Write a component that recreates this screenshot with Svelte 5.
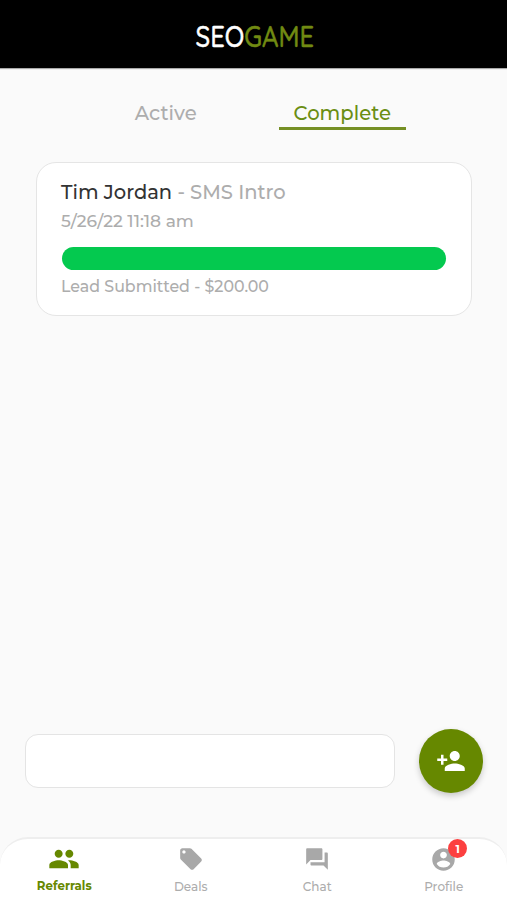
<script>
  const tabs = [
    { name: 'Referrals', size: 32, active: true, path: 'M16 11c1.66 0 2.99-1.34 2.99-3S17.66 5 16 5s-3 1.34-3 3 1.34 3 3 3zm-8 0c1.66 0 2.99-1.34 2.99-3S9.66 5 8 5 5 6.34 5 8s1.34 3 3 3zm0 2c-2.33 0-7 1.17-7 3.5V19h14v-2.5c0-2.33-4.67-3.5-7-3.5zm8 0c-.29 0-.62.02-.97.05 1.16.84 1.97 1.97 1.97 3.45V19h6v-2.5c0-2.33-4.67-3.5-7-3.5z' },
    { name: 'Deals', size: 26, path: 'M21.41 11.58l-9-9C12.05 2.22 11.55 2 11 2H4c-1.1 0-2 .9-2 2v7c0 .55.22 1.05.59 1.42l9 9c.36.36.86.58 1.41.58s1.05-.22 1.41-.59l7-7c.37-.36.59-.86.59-1.41s-.23-1.06-.59-1.42zM5.5 7C4.67 7 4 6.33 4 5.5S4.67 4 5.5 4 7 4.67 7 5.5 6.33 7 5.5 7z' },
    { name: 'Chat', size: 26, path: 'M21 6h-2v9H6v2c0 .55.45 1 1 1h11l4 4V7c0-.55-.45-1-1-1zm-4 6V3c0-.55-.45-1-1-1H3c-.55 0-1 .45-1 1v14l4-4h10c.55 0 1-.45 1-1z' },
    { name: 'Profile', size: 27, badge: 1, path: 'M12 2C6.48 2 2 6.48 2 12s4.48 10 10 10 10-4.48 10-10S17.52 2 12 2zm0 3c1.66 0 3 1.34 3 3s-1.34 3-3 3-3-1.34-3-3 1.34-3 3-3zm0 14.2c-2.5 0-4.71-1.28-6-3.22.03-1.99 4-3.08 6-3.08 1.99 0 5.97 1.09 6 3.08-1.29 1.94-3.5 3.22-6 3.22z' },
  ];
</script>

<div class="app">
  <header>
    <svg width="130" height="44" viewBox="0 0 130 44" aria-label="SEOGAME">
      <text x="6.5" y="32.5" textLength="118.5" lengthAdjust="spacingAndGlyphs"><tspan class="seo">SEO</tspan><tspan class="game">GAME</tspan></text>
    </svg>
  </header>

  <div class="filters">
    <button>Active</button>
    <button class="selected">Complete</button>
  </div>

  <article>
    <h2><b>Tim Jordan</b> - SMS Intro</h2>
    <p class="date">5/26/22 11:18 am</p>
    <div class="progress"></div>
    <p class="status">Lead Submitted - $200.00</p>
  </article>

  <div class="compose">
    <input aria-label="Referral" />
    <button class="fab" aria-label="Add referral">
      <svg width="30" height="30" viewBox="0 0 24 24" fill="#fff"><path d="M15 12c2.21 0 4-1.79 4-4s-1.79-4-4-4-4 1.79-4 4 1.79 4 4 4zm-9-2V7H4v3H1v2h3v3h2v-3h3v-2H6zm9 4c-2.67 0-8 1.34-8 4v2h16v-2c0-2.66-5.33-4-8-4z" /></svg>
    </button>
  </div>

  <nav>
    {#each tabs as tab}
      <button class:current={tab.active}>
        <span class="icon">
          <svg width={tab.size} height={tab.size} viewBox="0 0 24 24" fill="currentColor"><path d={tab.path} /></svg>
          {#if tab.badge}<span class="badge">{tab.badge}</span>{/if}
        </span>
        <span class="label">{tab.name}</span>
      </button>
    {/each}
  </nav>
</div>

<style>
  .app { width: 100%; height: 900px; display: flex; flex-direction: column; background: #fafafa; font-family: Montserrat, Inter, sans-serif; font-weight: 500; color: #adadad; overflow: hidden; }
  .app, .app * { box-sizing: border-box; }
  button { border: 0; background: none; padding: 0; margin: 0; font: inherit; color: inherit; }
  header { height: 68px; flex: none; background: #000; display: flex; justify-content: center; padding-top: 14px; box-shadow: 0 1px 1px #aaa; }
  header svg { font: 500 30px Quicksand, Lato, sans-serif; stroke-width: .5px; overflow: visible; }
  .seo { fill: #fff; stroke: #fff; }
  .game { fill: #718a12; stroke: #718a12; }
  .filters { display: flex; padding: 26px 0 0 102px; gap: 49px; height: 62px; flex: none; }
  .filters button { width: 127.5px; height: 35.5px; font-size: 19.6px; line-height: 38px; white-space: nowrap; }
  .filters .selected { color: #6b8e13; border-bottom: 3px solid #758f24; padding-top: 1px; line-height: 36px; }
  article { margin: 32px 35px 0 36px; height: 154px; flex: none; border: 1px solid #e5e5e5; border-radius: 20px; background: #fff; padding: 15px 25px 0 24px; white-space: nowrap; }
  h2 { margin: 0; font-size: 19.5px; line-height: 28px; font-weight: 500; }
  h2 b { font-weight: 500; color: #333; }
  p { margin: 0; }
  .date { font-size: 17.05px; line-height: 30px; }
  .progress { height: 23px; margin: 11px 0 0 1px; border-radius: 12px; background: #04c94f; }
  .status { font-size: 15.85px; line-height: 33px; }
  .compose { margin-top: auto; padding: 0 24px 0 25px; display: flex; align-items: center; justify-content: space-between; height: 64px; flex: none; }
  input { width: 370px; height: 54px; border: 1px solid #e4e4e4; border-radius: 13px; background: #fff; padding: 0 16px; font: inherit; outline: none; }
  .fab { width: 64px; height: 64px; border-radius: 50%; background: #668800; display: grid; place-items: center; box-shadow: 0 3px 6px #0003; }
  nav { margin-top: 44px; height: 63px; flex: none; display: flex; background: #fff; border-top: 2px solid #eee; border-radius: 28px 28px 0 0; padding-left: 1px; }
  nav button { flex: 1; display: flex; flex-direction: column; align-items: center; }
  .icon { position: relative; height: 40px; display: flex; align-items: center; color: #a8a8a8; }
  .label { font-size: 12px; line-height: 15px; }
  .current, .current .icon { color: #668800; }
  .current .label { font-weight: 700; font-size: 11.8px; }
  .badge { position: absolute; left: 18px; top: 0; width: 19px; height: 19px; border-radius: 50%; background: #fc4040; color: #fff; font-size: 11px; font-weight: 700; line-height: 20px; text-align: center; }
</style>
